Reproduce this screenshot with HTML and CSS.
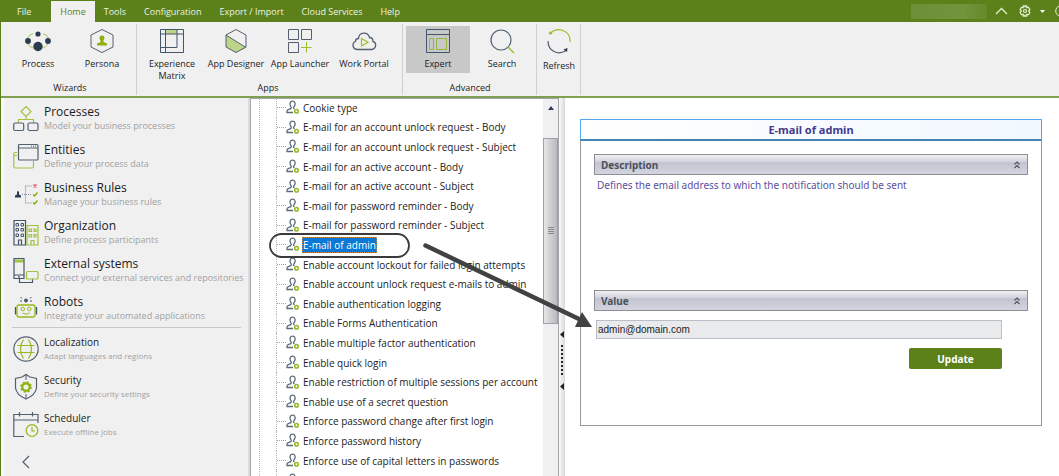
FILE: index.html
```html
<!DOCTYPE html>
<html lang="en">
<head>
<meta charset="utf-8">
<title>Management Console</title>
<link rel="stylesheet" href="styles.css">
</head>
<body>
<div class="app">
  <svg class="symbols" aria-hidden="true">
    <symbol id="user" viewBox="0 0 14 15">
      <path d="M8.500 9C7.200 8.300 7.200 7.600 8.200 6.500C9.800 4.500 9.300 1.200 6.600 1.200C3.900 1.200 3.400 4.300 4.800 6.300C5.600 7.500 5.300 8.600 3.800 9L2.200 9.700C1 10.300.8 11.500 1 12.500H7" fill="none" stroke="#5d6b79" stroke-width="1.300"/>
      <circle cx="10.500" cy="11.300" r="1.800" fill="none" stroke="#94b91e" stroke-width="1.500"/>
    </symbol>
    <symbol id="collapse" viewBox="0 0 8 8">
      <path d="M1.500 3.500L4 1L6.500 3.500M1.500 7L4 4.500L6.500 7" fill="none" stroke="#4a515d" stroke-width="1.100"/>
    </symbol>
  </svg>

  <header class="menubar">
    <nav class="tabs">
      <button class="tab tab-file">File</button>
      <button class="tab tab-active">Home</button>
      <button class="tab">Tools</button>
      <button class="tab">Configuration</button>
      <button class="tab">Export / Import</button>
      <button class="tab">Cloud Services</button>
      <button class="tab">Help</button>
    </nav>
    <div class="account">
      <span class="account-name"></span>
      <button class="icon-button" aria-label="Minimize ribbon"><svg width="13" height="8" viewBox="0 0 13 8"><path d="M1 7L6.500 1.500L12 7" fill="none" stroke="#e3efcd" stroke-width="1.300"/></svg></button>
      <button class="icon-button gear" aria-label="Settings"><svg width="12" height="12" viewBox="0 0 12 12"><g fill="none" stroke="#e3efcd" stroke-width="1.200"><circle cx="6" cy="6" r="1.500"/><path d="M4.300 2.500L4.300.8H5.400L6 1.700L6.600.8H7.700V2.500L9.600 2.300L10.900 4.400L9.600 6L10.900 7.600L9.600 9.700L7.700 9.500V11.200H6.600L6 10.300L5.400 11.200H4.300V9.500L2.400 9.700L1.100 7.600L2.400 6L1.100 4.400L2.400 2.300Z"/></g></svg><svg width="5" height="3" viewBox="0 0 5 3"><path d="M0 0H5L2.500 3Z" fill="#fff"/></svg></button>
      <button class="icon-button help" aria-label="Help"><svg width="12" height="12" viewBox="0 0 12 12"><circle cx="6" cy="6" r="5.300" fill="none" stroke="#e3efcd"/></svg></button>
    </div>
  </header>

  <div class="ribbon">
    <section class="group group-wizards">
      <div class="tools">
        <button class="tool"><svg width="26" height="26" viewBox="0 0 26 26"><g fill="none" stroke="#a4c23f"><path d="M8 5.500Q4 7 2.500 10M18 5.500Q22 7 23.500 10M3 16Q5 19 8 20M23 16Q21 19 18 20"/></g><g fill="#2b3c4f"><circle cx="13" cy="6" r="2.600"/><circle cx="3" cy="13" r="2.900"/><circle cx="23" cy="13" r="2.900"/><circle cx="13" cy="18.500" r="4.700"/></g></svg><span>Process</span></button>
        <button class="tool"><svg width="26" height="26" viewBox="0 0 26 26"><path d="M13 1.500L24 7V19L13 24.500L2 19V7Z" fill="none" stroke="#52606f" stroke-linejoin="round"/><path d="M13 7.500C10 7.500 10 11 11.500 12.500V14L8 15.500V17.500H18V15.500L14.500 14V12.500C16 11 16 7.500 13 7.500Z" fill="#8bb00f"/></svg><span>Persona</span></button>
      </div>
      <h2 class="group-title">Wizards</h2>
    </section>
    <section class="group group-apps">
      <div class="tools">
        <button class="tool"><svg width="26" height="26" viewBox="0 0 26 26"><path d="M7 2H18V6H7Z" fill="#bdd588"/><path d="M1.500 1.500H24.500V24.500H1.500ZM1.500 6H24.500M1.500 19.500H18V1.500M6.500 1.500V24.500" fill="none" stroke="#44566a"/></svg><span>Experience<br>Matrix</span></button>
        <button class="tool"><svg width="26" height="26" viewBox="0 0 26 26"><path d="M3 7L23 20L13 24.500L3 19Z" fill="#bdd588"/><path d="M13 1.500L23 7V19L13 24.500L3 19V7ZM3 7L23 19.500" fill="none" stroke="#52606f"/></svg><span>App Designer</span></button>
        <button class="tool"><svg width="26" height="26" viewBox="0 0 26 26"><path d="M1.500 1.500H11.500V11.500H1.500ZM14.500 1.500H24.500V11.500H14.500ZM1.500 14.500H11.500V24.500H1.500Z" fill="none" stroke="#52606f"/><path d="M19.500 14V24.500M14 19.500H24.500" stroke="#9abf2e" fill="none"/></svg><span>App Launcher</span></button>
        <button class="tool"><svg width="26" height="26" viewBox="0 0 26 26"><path d="M6 21.500H20.500C25.500 21 26 14.500 22 13.500C22 10.500 20 9.500 18.500 9.500C17 3.500 8 3.500 7.500 10.500C5.500 10.500 4.500 12 4.500 13.500C.5 15 1.500 21 6 21.500Z" fill="none" stroke="#52606f" stroke-width="1.300"/><path d="M10.500 10.500V18L17 14.200Z" fill="none" stroke="#9abf2e" stroke-width="1.200"/></svg><span>Work Portal</span></button>
      </div>
      <h2 class="group-title">Apps</h2>
    </section>
    <section class="group">
      <div class="tools">
        <button class="tool tool-active"><svg width="26" height="26" viewBox="0 0 26 26"><path d="M1.500 1.500H24.500V24.500H1.500ZM1.500 6.500H24.500" fill="none" stroke="#44566a"/><path d="M4.500 10.500H8.500V21.500H4.500ZM11.500 10.500H21.500V21.500H11.500Z" fill="none" stroke="#96b83c"/></svg><span>Expert</span></button>
        <button class="tool"><svg width="26" height="26" viewBox="0 0 26 26"><circle cx="12" cy="12" r="10" fill="none" stroke="#52606f" stroke-width="1.200"/><path d="M19 19L25 25" stroke="#9abf2e" stroke-width="1.400"/></svg><span>Search</span></button>
      </div>
      <h2 class="group-title">Advanced</h2>
    </section>
    <section class="group group-refresh">
      <div class="tools">
        <button class="tool"><svg width="26" height="26" viewBox="0 0 26 26"><path d="M4.500 5C12-2 25 3 24 14" fill="none" stroke="#9abf2e" stroke-width="1.200"/><circle cx="4.500" cy="5" r="1.600" fill="#9abf2e"/><path d="M2 13C2 23 12 28 20 22.500" fill="none" stroke="#52606f" stroke-width="1.200"/><path d="M17.500 21.500L21.500 20L21 24Z" fill="#2b3c4f"/></svg><span>Refresh</span></button>
      </div>
    </section>
  </div>

  <main class="workspace">
    <nav class="sidebar">
      <a class="nav-item" href="#"><svg width="26" height="28" viewBox="0 0 26 28"><path d="M13 1.500L18 6.500L13 11.500L8 6.500ZM13 11.500V14.500M5.500 18V14.500H20.500V18" fill="none" stroke="#a1c142" stroke-width="1.200"/><g fill="none" stroke="#52606f" stroke-width="1.200"><rect x=".7" y="18" width="10" height="7.500" rx="1.500"/><rect x="15" y="18" width="10" height="7.500" rx="1.500"/></g></svg><span class="nav-text"><b>Processes</b><small>Model your business processes</small></span></a>
      <a class="nav-item" href="#"><svg width="26" height="28" viewBox="0 0 26 28"><path d="M4 9.500H2.500Q.8 9.500.8 11V23.500Q.8 25 2.500 25H19Q20.500 25 20.500 23.500V18M.8 12.500H4" fill="none" stroke="#a1c142" stroke-width="1.200"/><path d="M6.500 1.500H24Q25 1.500 25 2.500V16Q25 17 24 17H6.500Q5.500 17 5.500 16V2.500Q5.500 1.500 6.500 1.500ZM5.500 5H25" fill="none" stroke="#52606f" stroke-width="1.200"/><path d="M18 3.200H24" stroke="#52606f" stroke-dasharray="1 1"/></svg><span class="nav-text"><b>Entities</b><small>Define your process data</small></span></a>
      <a class="nav-item" href="#"><svg width="26" height="28" viewBox="0 0 26 28"><path d="M2 16.500V14.500L4 13.500V12.500Q3.500 10 5 10Q6.500 10 6 12.500V13.500L8 14.500V16.500Z" fill="#2b3c4f"/><path d="M9 13.500H19M12.500 5.500V22M12.500 5H19M12.500 22H19" fill="none" stroke="#7d8792" stroke-dasharray="1 1"/><path d="M20.500 3.500L23.500 6.500M23.500 3.500L20.500 6.500" stroke="#df4a5a" stroke-width="1.200"/><path d="M20 13.500L21.500 15L24.500 11.500M20 21.500L21.500 23L24.500 19.500" fill="none" stroke="#8bb00f" stroke-width="1.500"/></svg><span class="nav-text"><b>Business Rules</b><small>Manage your business rules</small></span></a>
      <a class="nav-item" href="#"><svg width="26" height="28" viewBox="0 0 26 28"><path d="M1 26V1.500H12.500V26ZM5.500 26V21H8.500V26" fill="none" stroke="#44566a" stroke-width="1.200"/><g fill="none" stroke="#44566a"><path d="M3 4.500H5.500V7H3ZM8 4.500H10.500V7H8ZM3 9.500H5.500V12H3ZM8 9.500H10.500V12H8ZM3 15H5.500V17.500H3ZM8 15H10.500V17.500H8Z"/></g><path d="M14 6.500H25V26H14ZM18 26V21.500H21V26M16 10H18.500V12.500H16ZM21 10H23V12.500H21ZM16 15.500H18.500V18H16ZM21 15.500H23V18H21Z" fill="none" stroke="#a1c142" stroke-width="1.200"/></svg><span class="nav-text"><b>Organization</b><small>Define process participants</small></span></a>
      <a class="nav-item" href="#"><svg width="26" height="28" viewBox="0 0 26 28"><path d="M1.500 2.500H10.500V5.500H1.500Z" fill="#a1c142"/><path d="M1 1.500H11V21.500H1ZM1 18H11M5 19.800H7M6.500 21.500V25.500H19.500V22" fill="none" stroke="#44566a" stroke-width="1.200"/><rect x="13.500" y="14.500" width="11.500" height="7.500" rx="1" fill="none" stroke="#a1c142" stroke-width="1.200"/></svg><span class="nav-text"><b>External systems</b><small>Connect your external services and repositories</small></span></a>
      <a class="nav-item" href="#"><svg width="26" height="28" viewBox="0 0 26 28"><circle cx="13" cy="5.500" r="1.900" fill="#44566a"/><path d="M7.500 2L9 3.500M18.500 2L17 3.500M7 6H9M17 6H19" stroke="#44566a"/><rect x="4" y="10" width="18" height="12" rx="2" fill="none" stroke="#94b91e" stroke-width="1.300"/><path d="M2.500 12V19.500M23.500 12V19.500" stroke="#44566a" stroke-width="1.300"/><g fill="none" stroke="#94b91e"><circle cx="9.700" cy="14" r="1.800"/><circle cx="16.300" cy="14" r="1.800"/><path d="M9.500 18Q13 20.500 16.500 18"/></g></svg><span class="nav-text"><b>Robots</b><small>Integrate your automated applications</small></span></a>
      <hr class="nav-divider">
      <a class="nav-item nav-minor" href="#"><svg width="26" height="28" viewBox="0 0 26 28"><circle cx="13" cy="14" r="12.200" fill="none" stroke="#52606f" stroke-width="1.200"/><path d="M10.500 4.500Q4.500 14 10.500 23.500M15.500 4.500Q21.500 14 15.500 23.500M4.500 10.500H21.500M4.500 17.500H21.500" fill="none" stroke="#94b91e" stroke-width="1.200"/></svg><span class="nav-text"><b>Localization</b><small>Adapt languages and regions</small></span></a>
      <a class="nav-item nav-minor" href="#"><svg width="26" height="28" viewBox="0 0 26 28"><path d="M13 1.500L17 4L23.500 5.500V15Q22.500 22 13 26Q3.500 22 2.500 15V5.500L9 4Z" fill="none" stroke="#52606f" stroke-width="1.200"/><path d="M13 1.500V7M13 21V26" stroke="#52606f"/><circle cx="13" cy="14" r="3.700" fill="none" stroke="#8bb00f" stroke-width="2.200"/><circle cx="13" cy="14" r="5" fill="none" stroke="#8bb00f" stroke-width="1.600" stroke-dasharray="2 1.930"/></svg><span class="nav-text"><b>Security</b><small>Define your security settings</small></span></a>
      <a class="nav-item nav-minor" href="#"><svg width="26" height="28" viewBox="0 0 26 28"><path d="M11 25.500H.8V3.500H25V12M.8 9H25M6.500 1V5.500M19.500 1V5.500" fill="none" stroke="#52606f" stroke-width="1.200"/><circle cx="19" cy="19.500" r="5.800" fill="none" stroke="#94b91e" stroke-width="1.300"/><path d="M19 16V20H22" fill="none" stroke="#94b91e" stroke-width="1.200"/></svg><span class="nav-text"><b>Scheduler</b><small>Execute offline jobs</small></span></a>
      <button class="nav-back" aria-label="Back"><svg width="8" height="14" viewBox="0 0 8 14"><path d="M7 1L1 7L7 13" fill="none" stroke="#52606f" stroke-width="1.200"/></svg></button>
    </nav>

    <section class="tree">
      <ul class="tree-list">
        <li><svg><use href="#user"/></svg><span>Cookie type</span></li>
        <li><svg><use href="#user"/></svg><span>E-mail for an account unlock request - Body</span></li>
        <li><svg><use href="#user"/></svg><span>E-mail for an account unlock request - Subject</span></li>
        <li><svg><use href="#user"/></svg><span>E-mail for an active account - Body</span></li>
        <li><svg><use href="#user"/></svg><span>E-mail for an active account - Subject</span></li>
        <li><svg><use href="#user"/></svg><span>E-mail for password reminder - Body</span></li>
        <li><svg><use href="#user"/></svg><span>E-mail for password reminder - Subject</span></li>
        <li><svg><use href="#user"/></svg><span class="selected">E-mail of admin</span></li>
        <li><svg><use href="#user"/></svg><span>Enable account lockout for failed login attempts</span></li>
        <li><svg><use href="#user"/></svg><span>Enable account unlock request e-mails to admin</span></li>
        <li><svg><use href="#user"/></svg><span>Enable authentication logging</span></li>
        <li><svg><use href="#user"/></svg><span>Enable Forms Authentication</span></li>
        <li><svg><use href="#user"/></svg><span>Enable multiple factor authentication</span></li>
        <li><svg><use href="#user"/></svg><span>Enable quick login</span></li>
        <li><svg><use href="#user"/></svg><span>Enable restriction of multiple sessions per account</span></li>
        <li><svg><use href="#user"/></svg><span>Enable use of a secret question</span></li>
        <li><svg><use href="#user"/></svg><span>Enforce password change after first login</span></li>
        <li><svg><use href="#user"/></svg><span>Enforce password history</span></li>
        <li><svg><use href="#user"/></svg><span>Enforce use of capital letters in passwords</span></li>
        <li><svg><use href="#user"/></svg></li>
      </ul>
      <div class="scrollbar">
        <button class="scroll-up" aria-label="Scroll up"><svg width="6" height="4" viewBox="0 0 6 4"><path d="M0 4L3 0L6 4Z" fill="#2c3c60"/></svg></button>
        <div class="scroll-thumb"><span class="grip"></span></div>
      </div>
    </section>

    <div class="splitter">
      <svg width="4" height="7" viewBox="0 0 4 7"><path d="M4 0V7L0 3.500Z" fill="#222"/></svg>
      <span class="splitter-dots"></span>
      <svg width="4" height="7" viewBox="0 0 4 7"><path d="M4 0V7L0 3.500Z" fill="#222"/></svg>
    </div>

    <section class="details">
      <form class="card">
        <h1 class="card-title">E-mail of admin</h1>
        <div class="card-body">
          <h2 class="bar">Description<svg width="8" height="8"><use href="#collapse"/></svg></h2>
          <p class="description">Defines the email address to which the notification should be sent</p>
          <h2 class="bar"><label for="value">Value</label><svg width="8" height="8"><use href="#collapse"/></svg></h2>
          <div class="value-form">
            <input class="value-input" id="value" type="text" value="admin@domain.com">
            <button class="update" type="button">Update</button>
          </div>
        </div>
      </form>
    </section>

    <svg class="callout" width="330" height="100" viewBox="0 0 330 100" aria-hidden="true">
      <rect x="2" y="6" width="139" height="23" rx="11.500" fill="none" stroke="#3a3a3c" stroke-width="1.800"/>
      <path d="M157.500 17.500L311 91" stroke="#414244" stroke-width="4.500" stroke-linecap="round"/>
      <path d="M324 99L314 84L307 99Z" fill="#414244"/>
    </svg>
  </main>
</div>
</body>
</html>
```

FILE: styles.css
```css
* { box-sizing: border-box; }

body {
  margin: 0;
  font-family: "Open Sans", "Noto Sans", sans-serif;
  font-size: 9px;
  line-height: 12px;
  color: #1c1c1c;
  background: #fff;
}

button {
  font: inherit;
  color: inherit;
  background: none;
  border: 0;
  padding: 0;
}

h1, h2, p, ul { margin: 0; padding: 0; }
svg { flex: none; display: block; }
.symbols { position: absolute; width: 0; height: 0; }

.app {
  height: 100vh;
  display: flex;
  flex-direction: column;
  overflow: hidden;
  border-left: 1px solid #5b801b;
}

/* Menu bar */
.menubar {
  display: flex;
  justify-content: space-between;
  height: 22px;
  background: #5c811b;
  color: #eef3e4;
  overflow: hidden;
}
.tabs { display: flex; padding-top: 1px; }
.tab { padding: 0 9px; white-space: nowrap; }
.tab-file { padding: 0 20px 0 16px; }
.tab-active { background: #f0f0f0; color: #5c811b; }
.account { display: flex; align-items: center; gap: 8px; margin-right: -8px; }
.account-name {
  width: 76px;
  height: 15px;
  background: linear-gradient(90deg, #6c8f38, #71943c 70%, #64882a);
}
.icon-button { display: flex; align-items: center; }
.gear { gap: 9px; margin-left: 3px; }
.help { margin-left: 2px; }

/* Ribbon */
.ribbon {
  display: flex;
  height: 76px;
  padding: 2px 0 1px;
  background: #f0f0f0;
  border-bottom: 2px solid #809f50;
}
.group {
  display: flex;
  flex-direction: column;
  justify-content: space-between;
  padding: 2px 2px 1px 3px;
  border-right: 1px solid #cfcfcf;
}
.group-wizards { padding-left: 5px; }
.group-apps { padding-right: 6px; }
.tools { display: flex; }
.tool {
  width: 64px;
  height: 47px;
  display: flex;
  flex-direction: column;
  align-items: center;
  gap: 4px;
  padding-top: 2px;
  white-space: nowrap;
}
.tool-active { background: #c8c8c8; }
.group-title { font-size: inherit; font-weight: 400; text-align: center; }
.group-refresh .tool { width: 38px; gap: 6px; }

/* Workspace */
.workspace { position: relative; flex: 1; display: flex; min-height: 0; }

.sidebar {
  flex: none;
  width: 249px;
  padding: 7px 7px 0 8px;
  background: #f0f0f0;
  border-left: 3px solid #fafafa;
  border-right: 2px solid #dcdcdc;
}
.nav-item {
  display: flex;
  gap: 5px;
  height: 38px;
  padding-left: 1px;
  color: inherit;
  text-decoration: none;
}
.nav-text { display: flex; flex-direction: column; }
.nav-text b { font-size: 12px; font-weight: 400; line-height: 14px; }
.nav-text small { font-size: 9px; line-height: 14px; color: #a2a2a2; white-space: nowrap; }
.nav-divider { height: 2px; margin: -6px 0 6px; border: 0; border-top: 1px solid #c9c9c9; }
.nav-item.nav-minor b { font-size: 10px; }
.nav-item.nav-minor small { font-size: 8px; }
.nav-back { display: block; padding: 6px 10px; }

/* Settings tree */
.tree {
  flex: none;
  width: 309px;
  display: flex;
  background: #fff;
  border: 1px solid #a3a7ad;
  border-bottom: 0;
  overflow: hidden;
  font-size: 10px;
}
.tree-list {
  flex: 1;
  height: 392px;
  margin: -1px 0 0 8px;
  padding-left: 16px;
  display: grid;
  grid-auto-rows: 1fr;
  list-style: none;
  border-left: 1px dotted #b5b5b5;
}
.tree-list li {
  display: flex;
  align-items: center;
  border-left: 1px dotted #b5b5b5;
  white-space: nowrap;
}
.tree-list li::before { content: ""; width: 9px; border-top: 1px dotted #a5a5a5; }
.tree-list svg { width: 14px; height: 15px; }
.tree-list span { padding: 1px; margin-left: 2px; line-height: 14px; }
.tree-list .selected { background: #0a78d6; color: #fff; outline: 1px dotted #d08a45; outline-offset: -1px; }

.scrollbar { width: 15px; background: #f0f0f0; }
.scroll-up { display: flex; align-items: center; justify-content: center; width: 100%; height: 18px; }
.scroll-thumb {
  display: flex;
  align-items: center;
  justify-content: center;
  height: 186px;
  margin-top: 21px;
  border: 1px solid #a0a0a0;
  background: linear-gradient(90deg, #e6e6e8, #cfcfd3 50%, #b9b9bf);
}
.grip { width: 6px; height: 8px; background: repeating-linear-gradient(#8a8a8a 0 1px, transparent 1px 2px); }

.splitter {
  flex: none;
  width: 6px;
  display: flex;
  flex-direction: column;
  align-items: center;
  gap: 7px;
  padding-top: 233px;
  background: linear-gradient(90deg, #fafafa, #d9d9d9);
}
.splitter-dots { width: 2px; height: 31px; background: repeating-linear-gradient(#222 0 2px, transparent 2px 4px); }

/* Details */
.details {
  flex: 1;
  min-width: 0;
  padding: 21px 17px 0 15px;
  font-family: "Noto Sans", "Open Sans", sans-serif;
  font-size: 10px;
}
.card { border: 1px solid #9a9a9a; padding-bottom: 56px; }
.card-title {
  margin: -1px -1px 0;
  border: 1px solid #58a6ee;
  border-bottom: 2px solid #4583b5;
  background: linear-gradient(90deg, #fff, #f1f8ff);
  color: #453a8e;
  font-size: 11px;
  line-height: 19px;
  text-align: center;
}
.card-body { padding: 13px 13px 0; }
.bar {
  display: flex;
  align-items: center;
  justify-content: space-between;
  height: 21px;
  padding: 0 6px;
  border: 1px solid #8c8e96;
  background: linear-gradient(#f0f0f3, #d2d3dc 35%, #c3c4d0 40%, #d2d4e0);
  color: #4b525c;
  font-size: 10px;
}
.description { min-height: 115px; padding: 4px 3px; color: #5c4fa0; }
.value-form {
  display: flex;
  flex-direction: column;
  align-items: flex-end;
  gap: 9px;
  padding: 9px 26px 0 2px;
}
.value-input {
  width: 100%;
  height: 19px;
  padding: 0 1px;
  border: 1px solid #b9c0c8;
  background: #e8eaec;
  color: #1c1c1c;
  font: 10px "Liberation Sans", Arial, sans-serif;
}
.update {
  width: 93px;
  height: 21px;
  border-radius: 2px;
  background: #5c811b;
  color: #fff;
  font-weight: 700;
}

/* Annotation over the tree and the form */
.callout { position: absolute; left: 267px; top: 130px; pointer-events: none; }
```
